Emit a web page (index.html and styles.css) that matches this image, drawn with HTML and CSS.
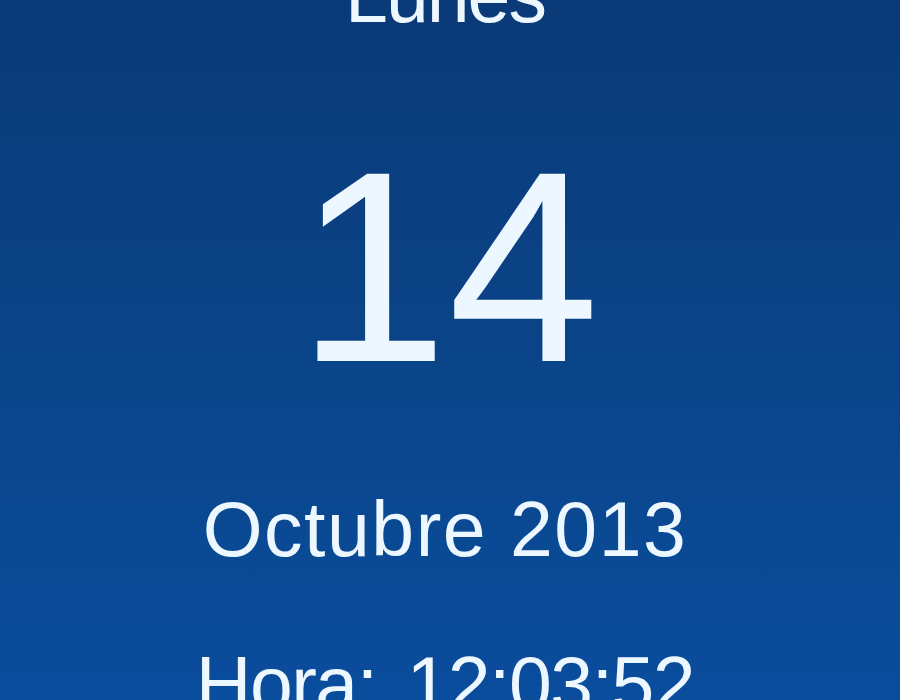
FILE: index.html
```html
<!DOCTYPE html>
<html lang="es">
<head>
<meta charset="utf-8">
<title>Calendario</title>
<link rel="stylesheet" href="styles.css">
</head>
<body>
<main class="widget">
  <div class="day">Lunes</div>
  <div class="date">14</div>
  <div class="month">Octubre 2013</div>
  <div class="time">Hora: 12:03:52</div>
</main>
</body>
</html>
```

FILE: styles.css
```css
html, body {
  margin: 0;
  padding: 0;
  width: 900px;
  height: 700px;
  overflow: hidden;
}

body {
  background: linear-gradient(180deg, #0a3a77 0%, #0a4488 50%, #0a4d9d 100%);
  font-family: "Liberation Sans", Arial, sans-serif;
  color: #ecf7ff;
}

.widget {
  display: flex;
  flex-direction: column;
  align-items: center;
  margin-top: -43px;
  padding-right: 10px;
}

.day,
.month,
.time {
  font-size: 77px;
  line-height: 77px;
  white-space: nowrap;
}

.day {
  letter-spacing: -2px;
}

.date {
  font-size: 272px;
  line-height: 272px;
  margin-top: 97px;
  padding-left: 6px;
}

.month {
  margin-top: 88px;
  letter-spacing: 1.5px;
}

.time {
  margin-top: 78px;
  letter-spacing: -1.5px;
  word-spacing: 10px;
}
```
